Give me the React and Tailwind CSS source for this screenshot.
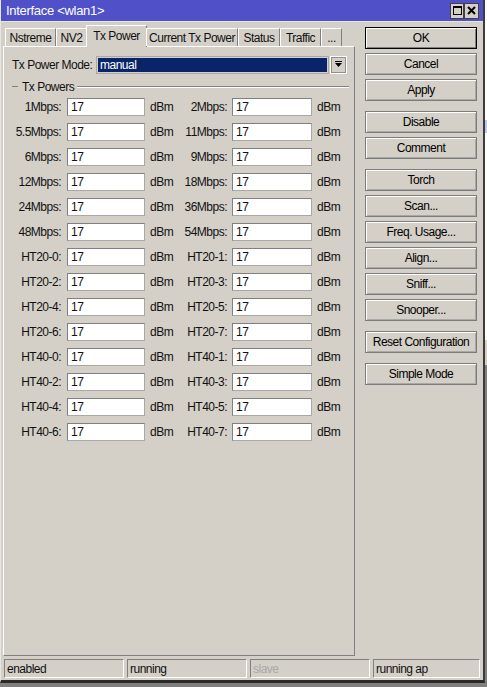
import React from "react";

const rows = [
  ["1Mbps:", "2Mbps:"],
  ["5.5Mbps:", "11Mbps:"],
  ["6Mbps:", "9Mbps:"],
  ["12Mbps:", "18Mbps:"],
  ["24Mbps:", "36Mbps:"],
  ["48Mbps:", "54Mbps:"],
  ["HT20-0:", "HT20-1:"],
  ["HT20-2:", "HT20-3:"],
  ["HT20-4:", "HT20-5:"],
  ["HT20-6:", "HT20-7:"],
  ["HT40-0:", "HT40-1:"],
  ["HT40-2:", "HT40-3:"],
  ["HT40-4:", "HT40-5:"],
  ["HT40-6:", "HT40-7:"],
];

const tabs = [
  { t: "Nstreme", w: "w-[51px]" },
  { t: "NV2", w: "w-[31px]" },
  { t: "Tx Power", w: "w-[61px]", active: true },
  { t: "Current Tx Power", w: "w-[92px]" },
  { t: "Status", w: "w-[42px]" },
  { t: "Traffic", w: "w-[41px]" },
  { t: "...", w: "w-[21px]" },
];

function Btn({ children, def, mt }) {
  return (
    <div
      className={`h-[22px] w-[112px] flex items-center justify-center ${mt || ""} ${
        def
          ? "border border-black shadow-[inset_1px_1px_0_#ffffff,inset_-1px_-1px_0_#808080]"
          : "border border-[#7c7c7c] shadow-[inset_1px_1px_0_#ffffff,inset_-1px_-1px_0_#a8a8a8]"
      } bg-[#d4d0c8] text-black`}
    >
      {children}
    </div>
  );
}

function Field() {
  return (
    <div className="h-[18px] bg-white border border-t-[#808080] border-l-[#808080] border-b-[#a8a8a8] border-r-[#a8a8a8] pl-[3px] flex items-center leading-none">
      17
    </div>
  );
}

export default function App() {
  return (
    <div
      className="w-[487px] h-[687px] bg-[#808080] flex overflow-hidden text-[12px] tracking-[-0.5px] text-[#111]"
      style={{ fontFamily: '"Liberation Sans", Arial, sans-serif' }}
    >
      <div className="w-[485px] h-[683px] flex flex-col bg-[#d4d0c8] border-l border-l-[#e8e6e0] border-r-2 border-r-[#3c3c3c] border-b-[3px] border-b-[#2a2a2a]">
        {/* title bar */}
        <div className="h-[21px] bg-[#5050c8] flex items-center justify-between pl-[5px] pr-[4px] text-white text-[13px] tracking-[-0.3px]">
          <span>Interface &lt;wlan1&gt;</span>
          <div className="flex">
            <div className="w-[14px] h-[16px] bg-[#d4d0c8] border border-[#404040] flex items-center justify-center">
              <div className="w-[9px] h-[9px] border border-black border-t-2"></div>
            </div>
            <div className="w-[15px] h-[16px] bg-[#d4d0c8] border border-[#404040] flex items-center justify-center">
              <svg width="9" height="9" viewBox="0 0 9 9">
                <path d="M1 1 L8 8 M8 1 L1 8" stroke="black" strokeWidth="2" />
              </svg>
            </div>
          </div>
        </div>
        <div className="h-px bg-[#e8e6e0]"></div>
        {/* body */}
        <div className="flex-1 flex flex-col px-[2px] pt-[3px] pb-[2px]">
          <div className="flex-1 flex">
            {/* left */}
            <div className="w-[352px] flex flex-col">
              <div className="h-[21px] flex items-end pl-[2px] relative z-10">
                {tabs.map((tb) => (
                  <div
                    key={tb.t}
                    className={`${tb.w} flex items-center justify-center shrink-0 ${
                      tb.active
                        ? "h-[22px] -mb-px bg-[#d4d0c8] border-t border-l border-t-white border-l-white border-r border-r-[#808080] mx-[-1px] pb-[2px]"
                        : "h-[18px] border-t border-l border-t-white border-l-white border-r border-r-[#808080] pt-[1px]"
                    }`}
                  >
                    {tb.t}
                  </div>
                ))}
              </div>
              <div className="flex-1 border border-t-white border-l-white border-r-[#808080] border-b-[#808080] pt-[9px] pl-[8px]">
                <div className="flex items-center h-[18px]">
                  <span className="w-[84px]">Tx Power Mode:</span>
                  <div className="w-[233px] h-[18px] border border-[#a8a8a8] p-px">
                    <div className="h-full bg-[#0a246a] text-white flex items-center pl-[2px] leading-none">
                      manual
                    </div>
                  </div>
                  <div className="ml-[1px] w-[17px] h-[18px] border border-white shadow-[inset_0_0_0_1px_#909090] flex items-center justify-center">
                    <svg width="8" height="8" viewBox="0 0 8 8">
                      <rect x="0" y="0" width="7" height="1" fill="black" />
                      <path d="M0 2 H7 L3.5 6 Z" fill="black" />
                    </svg>
                  </div>
                </div>
                <div className="flex items-center mt-[6px] h-[13px]">
                  <div className="w-[6px] h-px bg-[#808080] ml-[0px]"></div>
                  <span className="ml-[4px] mr-[3px]">Tx Powers</span>
                  <div className="w-[272px] h-px bg-[#808080] shadow-[0_1px_0_#ffffff]"></div>
                </div>
                <div className="flex flex-col gap-[7px] mt-[5px] -ml-[8px]">
                  {rows.map(([a, b]) => (
                    <div key={a} className="flex items-center h-[18px]">
                      <span className="w-[57px] text-right shrink-0">{a}</span>
                      <div className="w-[78px] ml-[6px] shrink-0">
                        <Field />
                      </div>
                      <span className="ml-[5px] w-[24px] shrink-0">dBm</span>
                      <span className="w-[53px] text-right shrink-0">{b}</span>
                      <div className="w-[80px] ml-[5px] shrink-0">
                        <Field />
                      </div>
                      <span className="ml-[5px]">dBm</span>
                    </div>
                  ))}
                </div>
              </div>
            </div>
            {/* right buttons */}
            <div className="ml-[10px] flex flex-col pt-[2px] gap-[4px]">
              <Btn def>OK</Btn>
              <Btn>Cancel</Btn>
              <Btn>Apply</Btn>
              <Btn mt="mt-[6px]">Disable</Btn>
              <Btn>Comment</Btn>
              <Btn mt="mt-[6px]">Torch</Btn>
              <Btn>Scan...</Btn>
              <Btn>Freq. Usage...</Btn>
              <Btn>Align...</Btn>
              <Btn>Sniff...</Btn>
              <Btn>Snooper...</Btn>
              <Btn mt="mt-[6px]">Reset Configuration</Btn>
              <Btn mt="mt-[6px]">Simple Mode</Btn>
            </div>
          </div>
          {/* status bar */}
          <div className="flex gap-[3px] mt-[3px] pl-px">
            {["enabled", "running", "slave", "running ap"].map((s, i) => (
              <div
                key={s}
                className={`h-[19px] ${i === 3 ? "w-[107px]" : "w-[120px]"} border border-t-[#808080] border-l-[#808080] border-b-white border-r-white flex items-center pl-[2px] ${
                  i === 2 ? "text-[#a8a8a8]" : ""
                }`}
              >
                {s}
              </div>
            ))}
          </div>
        </div>
      </div>
      <div className="w-[2px] flex flex-col">
        <div className="h-[120px] bg-white"></div>
        <div className="h-[13px] bg-[#b8c8f0]"></div>
        <div className="h-[207px] bg-white"></div>
        <div className="h-[25px] bg-[#d4d0c8]"></div>
        <div className="flex-1 bg-[#808080]"></div>
      </div>
    </div>
  );
}
